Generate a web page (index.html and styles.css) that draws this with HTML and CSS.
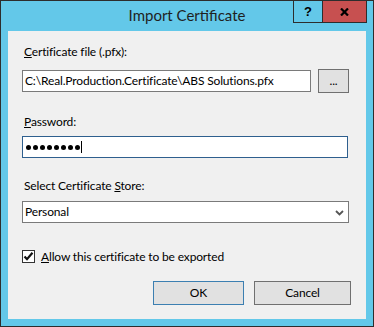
FILE: index.html
```html
<!DOCTYPE html>
<html lang="en">
<head>
    <meta charset="UTF-8">
    <title>Import Certificate</title>
    <link rel="stylesheet" href="styles.css">
</head>
<body>
    <div class="window">
        <div class="titlebar">
            <span class="title">Import Certificate</span>
            <div class="caption-buttons">
                <div class="cap-btn help">?</div>
                <div class="cap-btn close">
                    <svg width="9" height="8" viewBox="0 0 9 8">
                        <path d="M1 0.5 L8 7.5 M8 0.5 L1 7.5" stroke="#000" stroke-width="2.2" fill="none"/>
                    </svg>
                </div>
            </div>
        </div>

        <div class="client">
            <div class="label label-file"><u>C</u>ertificate file (.pfx):</div>
            <div class="row-file">
                <div class="field field-file">C:\Real.Production.Certificate\ABS Solutions.pfx</div>
                <div class="btn btn-browse">...</div>
            </div>

            <div class="label label-pass"><u>P</u>assword:</div>
            <div class="field field-pass focused">
                <span class="dot"></span><span class="dot"></span><span class="dot"></span><span class="dot"></span><span class="dot"></span><span class="dot"></span><span class="dot"></span><span class="dot"></span><span class="caret"></span>
            </div>

            <div class="label label-store">Select Certificate <u>S</u>tore:</div>
            <div class="field field-select">
                <span>Personal</span>
                <svg class="chevron" width="9" height="6" viewBox="0 0 9 6">
                    <path d="M1 1 L4.5 4.5 L8 1" stroke="#555" stroke-width="1.8" fill="none"/>
                </svg>
            </div>

            <div class="check-row">
                <span class="checkbox">
                    <svg width="11" height="11" viewBox="0 0 11 11">
                        <path d="M1.5 5.5 L4 8.2 L9.5 1.8" stroke="#111" stroke-width="2.2" fill="none"/>
                    </svg>
                </span>
                <span class="check-label"><u>A</u>llow this certificate to be exported</span>
            </div>

            <div class="actions">
                <div class="btn btn-ok">OK</div>
                <div class="btn btn-cancel">Cancel</div>
            </div>
        </div>
    </div>
</body>
</html>
```

FILE: styles.css
```css
body {
    margin: 0;
    font-family: Lato, "Noto Sans", sans-serif;
    font-size: 12px;
    letter-spacing: -0.15px;
    color: #000;
    background: #ffffff;
}
.window {
    width: 372px;
    height: 325px;
    border: 1px solid #2d2d2d;
    background-color: #63c8e9;
}
.titlebar {
    height: 30px;
    display: flex;
    align-items: center;
    justify-content: center;
    position: relative;
}
.title {
    font-size: 15px;
    letter-spacing: 0;
    color: #1f1f1f;
    line-height: 20px;
    margin-top: -3px;
}
.caption-buttons {
    position: absolute;
    top: -1px;
    right: 6px;
    display: flex;
}
.cap-btn {
    height: 21px;
    display: flex;
    align-items: center;
    justify-content: center;
    border: 1px solid #2d2d2d;
}
.help {
    width: 28px;
    border-right: none;
    font-family: "Liberation Sans", sans-serif;
    font-weight: bold;
    font-size: 13px;
}
.close {
    width: 43px;
    background-color: #c75050;
}
.client {
    margin: 0 7px;
    width: 358px;
    height: 288px;
    background-color: #f0f0f0;
    box-sizing: border-box;
    padding: 13px 0 0 14px;
}
.label {
    line-height: 16px;
    padding-left: 2px;
}
.row-file {
    display: flex;
    align-items: center;
    margin-top: 9px;
}
.field {
    box-sizing: border-box;
    height: 22px;
    border: 1px solid #7a7a7a;
    background-color: #fff;
    line-height: 18px;
    padding: 0 0 1px 2px;
    display: flex;
    align-items: center;
}
.field-file {
    width: 289px;
}
.btn {
    box-sizing: border-box;
    height: 24px;
    border: 1px solid #707070;
    background-color: #e1e1e1;
    display: flex;
    align-items: center;
    justify-content: center;
    padding-bottom: 1px;
}
.btn-browse {
    width: 31px;
    margin-left: 7px;
}
.label-pass {
    margin-top: 21px;
}
.field-pass {
    width: 326px;
    margin-top: 6px;
    padding: 0 0 0 3px;
}
.focused {
    border-color: #2e5f8e;
}
.dot {
    width: 5px;
    height: 5px;
    border-radius: 50%;
    background-color: #000;
    margin-right: 2px;
}
.caret {
    width: 1px;
    height: 12px;
    background-color: #000;
    margin-left: -1px;
}
.label-store {
    margin-top: 20px;
}
.field-select {
    width: 327px;
    margin-top: 7px;
    justify-content: space-between;
    padding-right: 4px;
}
.chevron {
    margin-top: 2px;
}
.check-row {
    display: flex;
    align-items: center;
    margin-top: 27px;
    height: 13px;
}
.checkbox {
    box-sizing: border-box;
    width: 13px;
    height: 13px;
    border: 1px solid #333;
    background-color: #fff;
    display: flex;
    align-items: center;
    justify-content: center;
}
.check-label {
    margin-left: 6px;
    line-height: 16px;
}
.actions {
    display: flex;
    margin-top: 18px;
    padding-left: 131px;
    gap: 10px;
}
.btn-ok {
    width: 91px;
    border-color: #3c7fb1;
}
.btn-cancel {
    width: 97px;
}
```
